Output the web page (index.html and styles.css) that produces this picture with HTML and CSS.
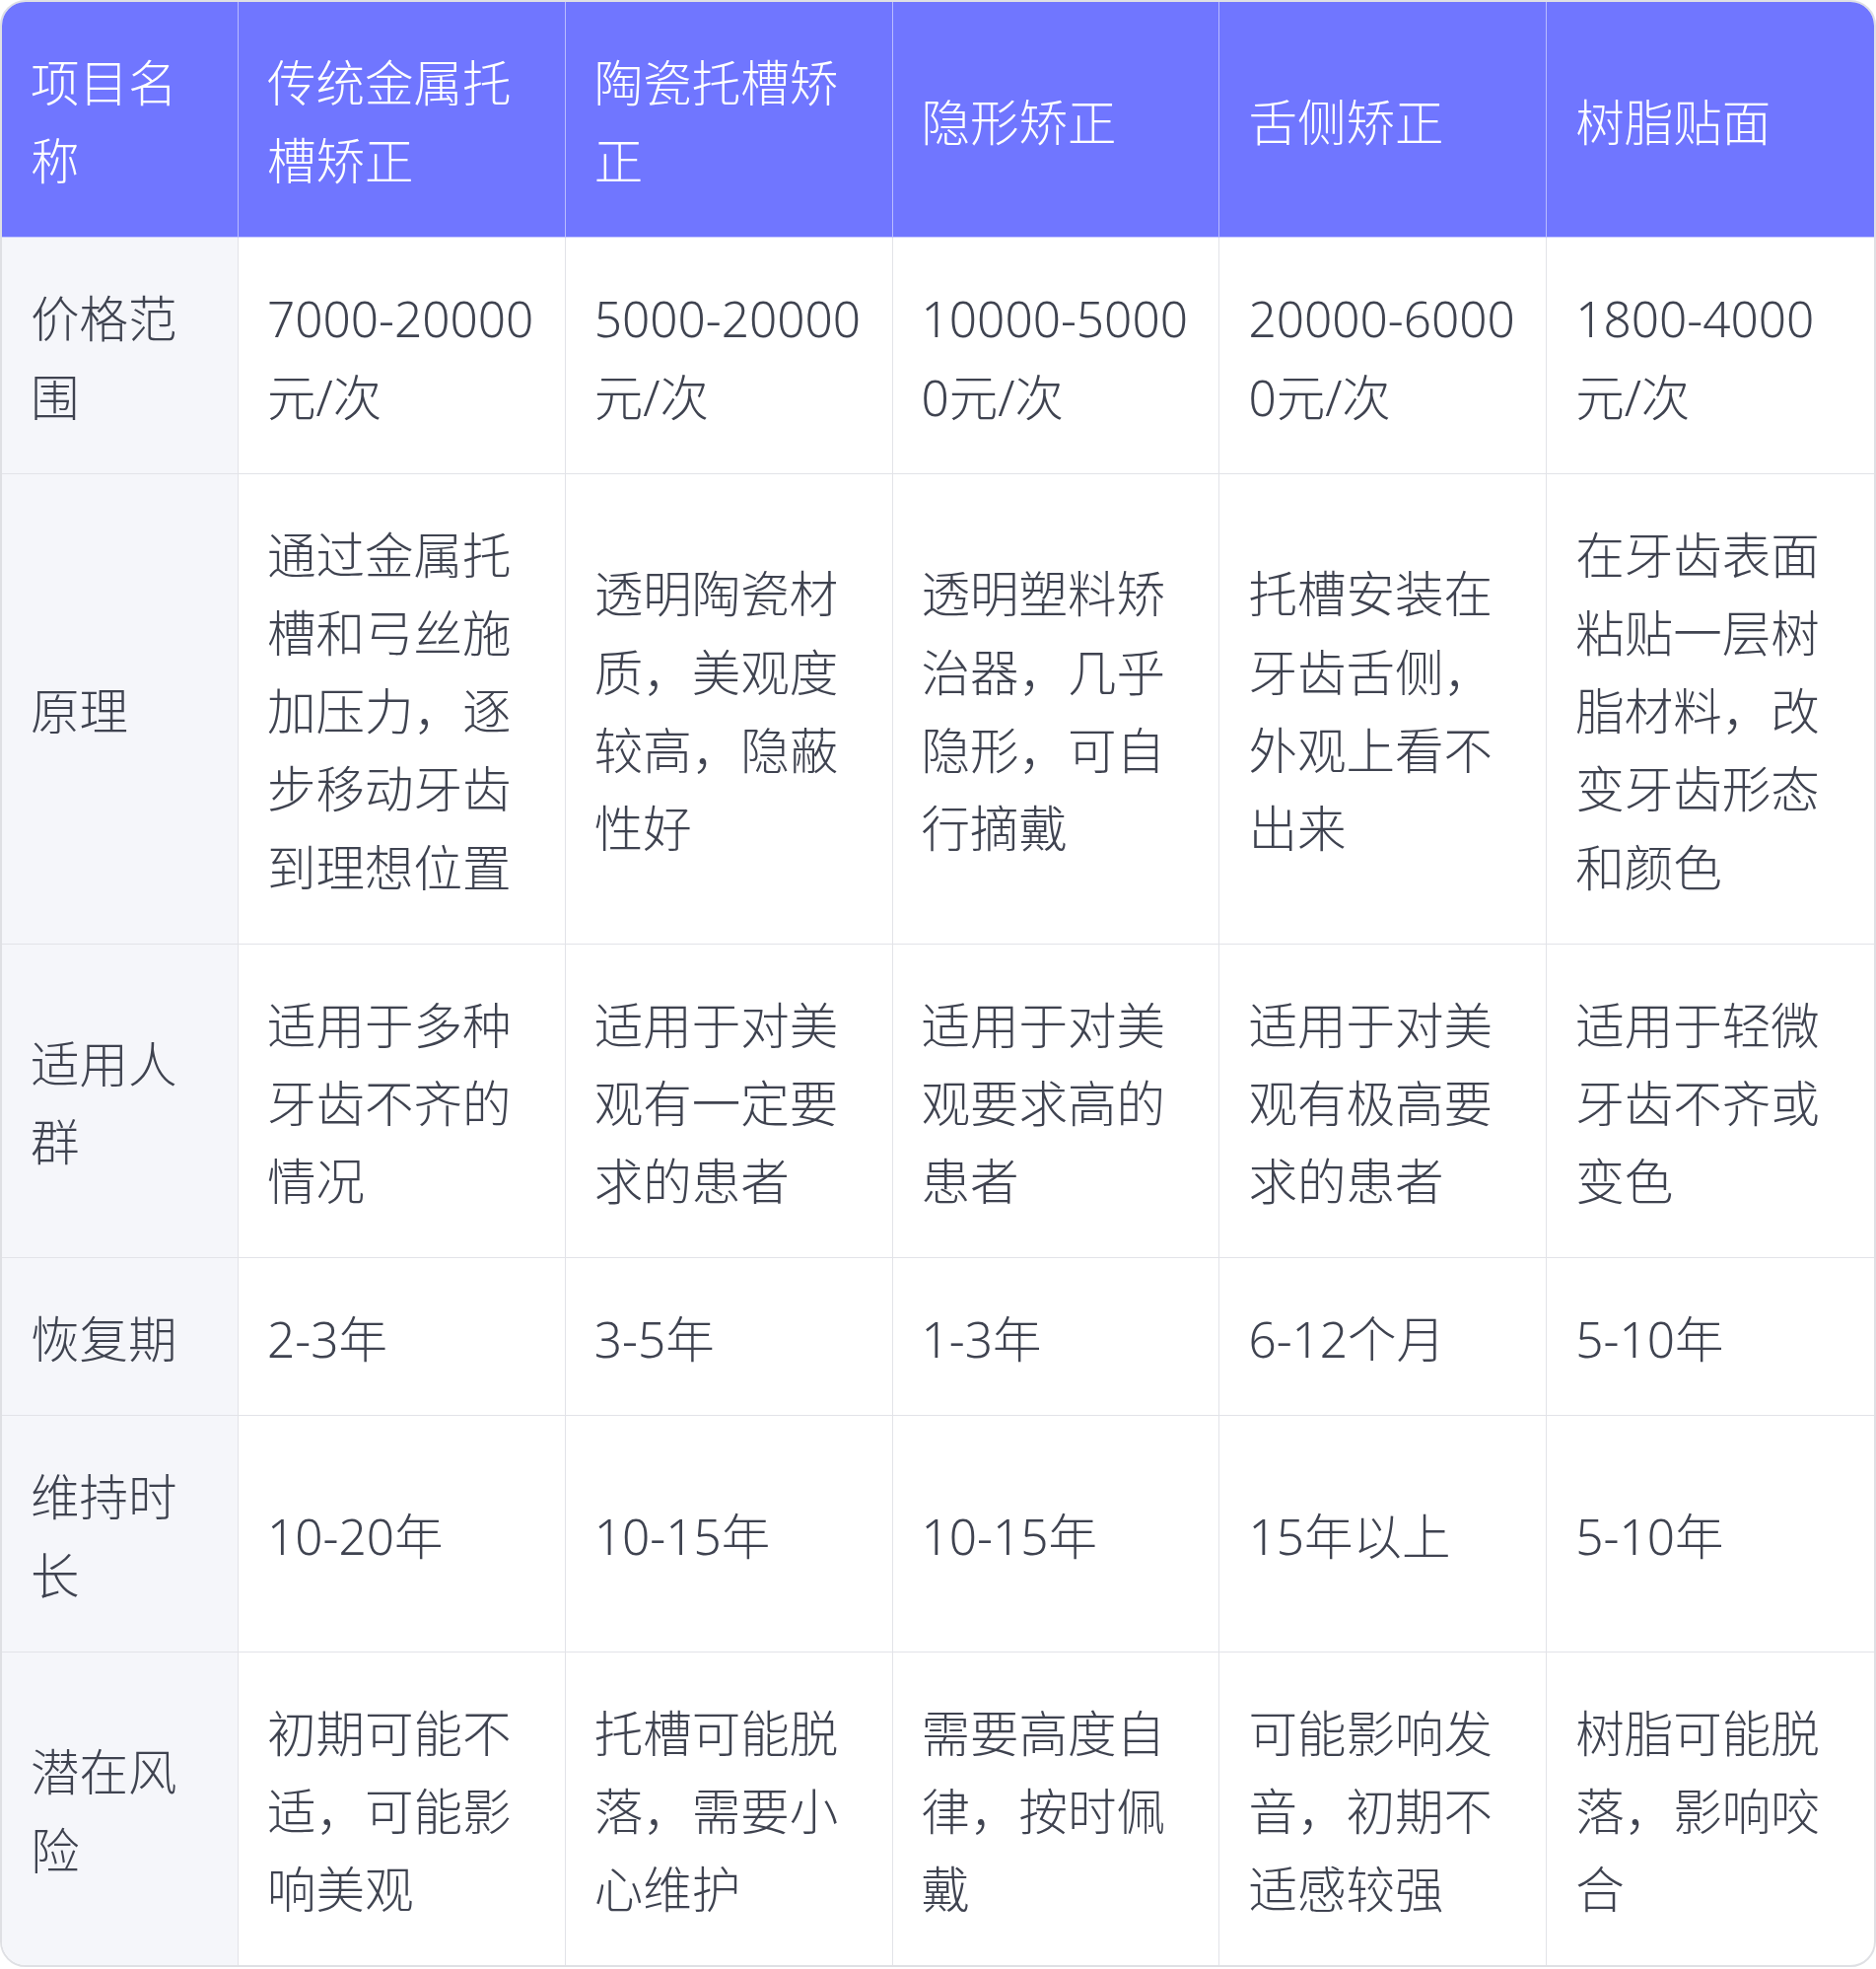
FILE: index.html
```html
<!DOCTYPE html>
<html lang="zh-CN">
<head>
<meta charset="utf-8">
<title>牙齿矫正对比</title>
<link rel="stylesheet" href="styles.css">
</head>
<body>
<div class="wrap">
<table class="cmp">
<colgroup><col class="c-first"><col><col><col><col><col></colgroup>
<thead>
<tr><th>项目名称</th><th>传统金属托槽矫正</th><th>陶瓷托槽矫正</th><th>隐形矫正</th><th>舌侧矫正</th><th>树脂贴面</th></tr>
</thead>
<tbody>
<tr><td>价格范围</td><td>7000-20000元/次</td><td>5000-20000元/次</td><td>10000-50000元/次</td><td>20000-60000元/次</td><td>1800-4000元/次</td></tr>
<tr><td>原理</td><td>通过金属托槽和弓丝施加压力，逐步移动牙齿到理想位置</td><td>透明陶瓷材质，美观度较高，隐蔽性好</td><td>透明塑料矫治器，几乎隐形，可自行摘戴</td><td>托槽安装在牙齿舌侧，外观上看不出来</td><td>在牙齿表面粘贴一层树脂材料，改变牙齿形态和颜色</td></tr>
<tr><td>适用人群</td><td>适用于多种牙齿不齐的情况</td><td>适用于对美观有一定要求的患者</td><td>适用于对美观要求高的患者</td><td>适用于对美观有极高要求的患者</td><td>适用于轻微牙齿不齐或变色</td></tr>
<tr><td>恢复期</td><td>2-3年</td><td>3-5年</td><td>1-3年</td><td>6-12个月</td><td>5-10年</td></tr>
<tr><td>维持时长</td><td>10-20年</td><td>10-15年</td><td>10-15年</td><td>15年以上</td><td>5-10年</td></tr>
<tr><td>潜在风险</td><td>初期可能不适，可能影响美观</td><td>托槽可能脱落，需要小心维护</td><td>需要高度自律，按时佩戴</td><td>可能影响发音，初期不适感较强</td><td>树脂可能脱落，影响咬合</td></tr>
</tbody>
</table>
</div>
</body>
</html>
```
FILE: styles.css
```css
html, body {
  margin: 0;
  padding: 0;
  background: #ffffff;
}
.wrap {
  border: 2px solid #dfe0e4;
  border-radius: 26px;
  overflow: hidden;
}
.cmp {
  width: 100%;
  table-layout: fixed;
  border-collapse: separate;
  border-spacing: 0;
  font-family: "Noto Sans", "Noto Sans CJK SC", sans-serif;
  font-weight: 300;
  font-size: 49.5px;
  line-height: 1.6;
  color: #3f4350;
}
.c-first {
  width: 240px;
}
.cmp th,
.cmp td {
  padding: 43px 29px 37px;
  text-align: left;
  vertical-align: middle;
  word-break: break-all;
  border-right: 1px solid #e2e3e8;
  border-bottom: 1px solid #e2e3e8;
}
.cmp th:last-child,
.cmp td:last-child {
  border-right: none;
}
.cmp tbody tr:last-child td {
  border-bottom: none;
}
.cmp th {
  background: #7076ff;
  color: #ffffff;
  font-weight: 300;
  border-right-color: #b9bcff;
  border-bottom-color: #c3c6ff;
}
.cmp td:first-child {
  background: #f5f6fa;
}
```
